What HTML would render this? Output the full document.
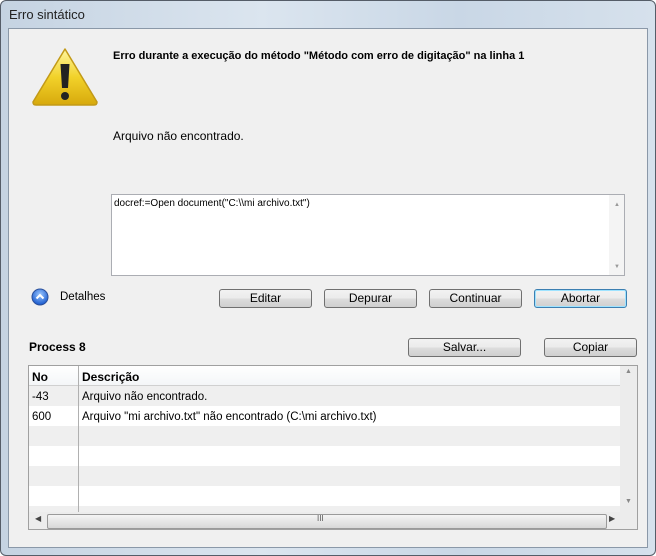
<!DOCTYPE html>
<html><head><meta charset="utf-8"><style>
body{margin:0;width:656px;height:556px;overflow:hidden;font-family:"Liberation Sans",sans-serif;font-size:12px;background:#fff}
.win{position:absolute;left:0;top:0;width:654px;height:554px;border:1px solid #555d68;border-radius:6px;background:linear-gradient(90deg,#c5d3e2,#dbe5ef 40%,#c9d7e6 70%,#d6e1ec);}
.title{position:absolute;left:8px;top:6px;font-size:13px;color:#222}
.client{position:absolute;left:8px;top:28px;width:638px;height:518px;background:#f0f0f0;border:1px solid #8a98a8}
.abs{position:absolute}
.btn{position:absolute;height:17px;border:1px solid #707070;border-radius:3px;background:linear-gradient(#f2f2f2,#ebebeb 50%,#dddddd 51%,#cfcfcf);text-align:center;line-height:17px;font-size:12px;color:#000}
.b{font-weight:bold}
.t{font-size:11.5px}
</style></head><body>
<div class="win">
<div class="title">Erro sintático</div>
</div>
<div class="client">
<svg class="abs" style="left:22px;top:18px" width="68" height="60" viewBox="0 0 68 60">
<defs><linearGradient id="g" x1="0" y1="0" x2="0" y2="1"><stop offset="0" stop-color="#fff6a0"/><stop offset=".5" stop-color="#f2d22a"/><stop offset="1" stop-color="#d7a90c"/></linearGradient></defs>
<path d="M34 2 L66 55 Q66 58 63 58 L5 58 Q2 58 2 55 Z" fill="url(#g)" stroke="#c29a18" stroke-width="1.5" stroke-linejoin="round"/>
<path d="M29.5 17 L38.5 17 L37 41 L31 41 Z" fill="#222"/>
<circle cx="34" cy="49" r="4" fill="#222"/>
</svg>
<div class="abs b" style="left:104px;top:21px;font-size:11px">Erro durante a execução do método "Método com erro de digitação" na linha 1</div>
<div class="abs" style="left:104px;top:100px">Arquivo não encontrado.</div>
<div class="abs" style="left:102px;top:165px;width:512px;height:80px;background:#fff;border:1px solid #abadb3">
<div class="abs" style="left:2px;top:3px;font-size:10px">docref:=Open document("C:\\mi archivo.txt")</div>
<div class="abs" style="right:0;top:0;width:15px;height:80px;background:#f4f4f4"></div>
<div class="abs" style="right:4px;top:7px;font-size:6px;color:#999">▲</div>
<div class="abs" style="right:4px;bottom:5px;font-size:6px;color:#999">▼</div>
</div>
<svg class="abs" style="left:22px;top:259px" width="18" height="18" viewBox="0 0 18 18">
<defs><radialGradient id="r" cx="50%" cy="35%" r="60%"><stop offset="0" stop-color="#9cc8ff"/><stop offset="1" stop-color="#1f5fd0"/></radialGradient></defs>
<circle cx="9" cy="9" r="8" fill="url(#r)" stroke="#2a4f9a"/>
<path d="M5.5 10.5 L9 7 L12.5 10.5" fill="none" stroke="#fff" stroke-width="2"/>
</svg>
<div class="abs" style="left:51px;top:262px;font-size:11.5px">Detalhes</div>
<div class="btn" style="left:210px;top:260px;width:91px">Editar</div>
<div class="btn" style="left:315px;top:260px;width:91px">Depurar</div>
<div class="btn" style="left:420px;top:260px;width:91px">Continuar</div>
<div class="btn" style="left:525px;top:260px;width:91px;border-color:#3c7fb1;box-shadow:inset 0 0 0 1px #9ee3ff">Abortar</div>
<div class="abs b" style="left:20px;top:311px">Process 8</div>
<div class="btn" style="left:399px;top:309px;width:111px">Salvar...</div>
<div class="btn" style="left:535px;top:309px;width:91px">Copiar</div>
<div class="abs" style="left:19px;top:336px;width:608px;height:163px;background:#fff;border:1px solid #a0a0a0;overflow:hidden">
<div class="abs" style="left:0;top:0;width:591px;height:19px;background:linear-gradient(#fff,#f4f6f8);border-bottom:1px solid #d0d0d0"></div>
<div class="abs b" style="left:3px;top:4px">No</div>
<div class="abs b" style="left:53px;top:4px">Descrição</div>
<div class="abs" style="left:0;top:20px;width:591px;height:20px;background:#efefef"></div>
<div class="abs" style="left:0;top:60px;width:591px;height:20px;background:#efefef"></div>
<div class="abs" style="left:0;top:100px;width:591px;height:20px;background:#efefef"></div>
<div class="abs" style="left:0;top:140px;width:591px;height:6px;background:#efefef"></div>
<div class="abs" style="left:49px;top:0;width:1px;height:146px;background:#b0b0b0"></div>
<div class="abs t" style="left:3px;top:25px">-43</div>
<div class="abs t" style="left:53px;top:25px">Arquivo não encontrado.</div>
<div class="abs t" style="left:3px;top:45px">600</div>
<div class="abs t" style="left:53px;top:45px">Arquivo "mi archivo.txt"  não encontrado (C:\mi archivo.txt)</div>
<div class="abs" style="left:591px;top:0;width:17px;height:163px;background:#ececec"></div>
<div class="abs" style="left:596px;top:2px;font-size:7px;color:#888">▲</div>
<div class="abs" style="left:596px;top:132px;font-size:7px;color:#888">▼</div>
<div class="abs" style="left:0;top:146px;width:591px;height:17px;background:#ececec"></div>
<div class="abs" style="left:18px;top:148px;width:558px;height:13px;border:1px solid #9a9a9a;border-radius:2px;background:linear-gradient(#f4f4f4,#d8d8d8)"></div>
<div class="abs" style="left:288px;top:148px;font-size:8px;color:#555">III</div>
<div class="abs" style="left:6px;top:148px;font-size:8px;color:#444">◀</div>
<div class="abs" style="left:580px;top:148px;font-size:8px;color:#444">▶</div>
</div>
</div>
</body></html>
